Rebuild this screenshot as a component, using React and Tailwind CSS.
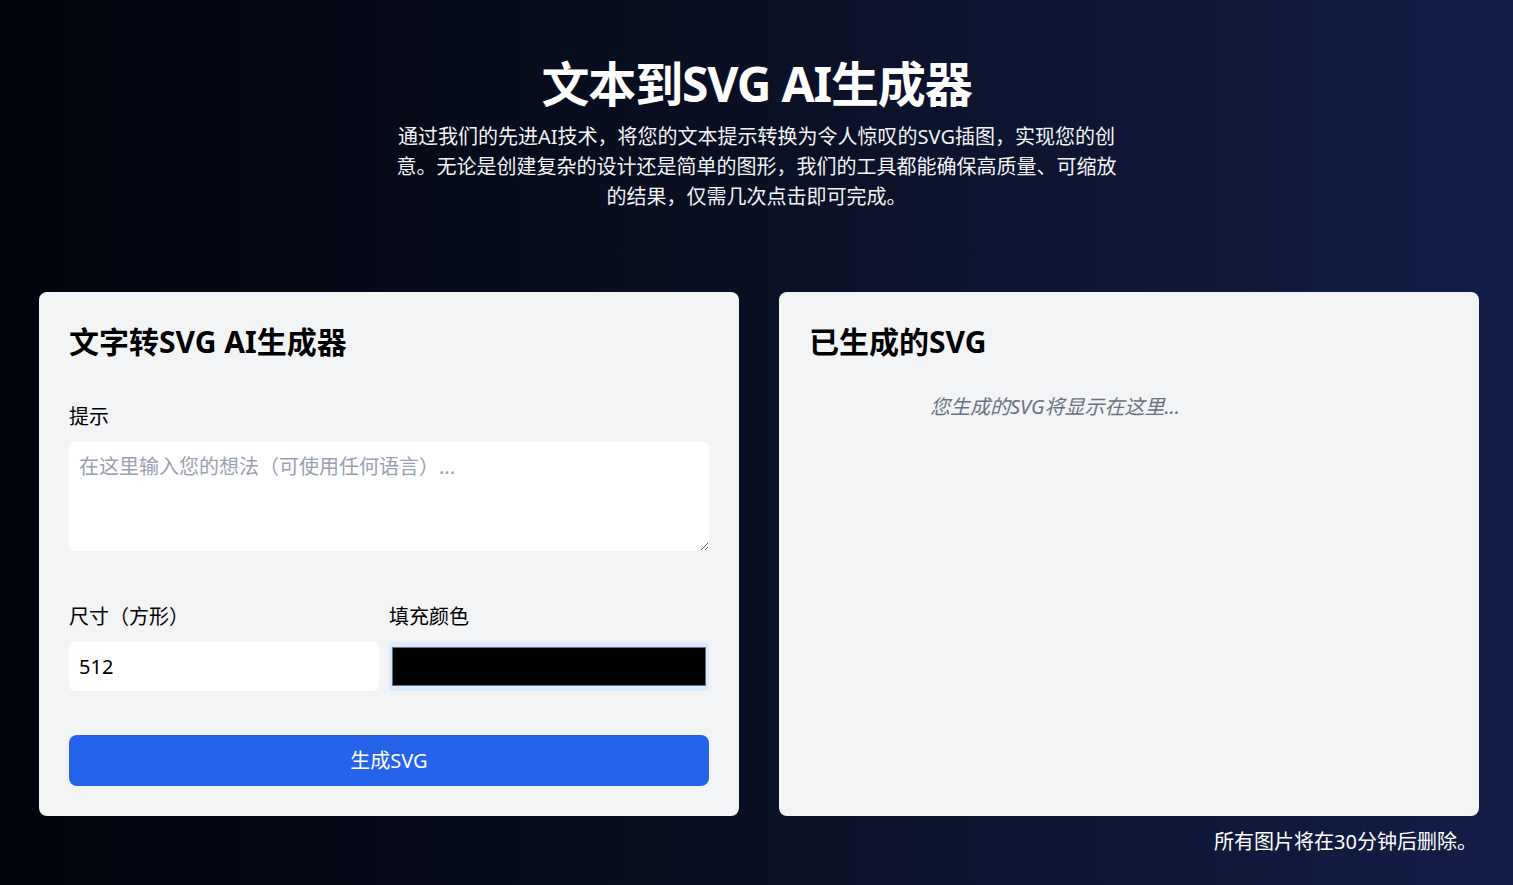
export default function App() {
  const font = { fontFamily: '"Noto Sans", "Noto Sans CJK SC", sans-serif' };

  return (
    <div
      style={font}
      className="min-h-screen w-full bg-gradient-to-r from-[#03050d] via-[#0a1024] to-[#131d48] text-white"
    >
      <div className="flex flex-col items-center pt-[56px]">
        <h1 className="text-[48px] font-bold leading-[56px] tracking-tight">
          文本到SVG AI生成器
        </h1>
        <p className="mt-[10px] w-[728px] text-center text-[20px] leading-[30px] text-gray-100">
          通过我们的先进AI技术，将您的文本提示转换为令人惊叹的SVG插图，实现您的创意。无论是创建复杂的设计还是简单的图形，我们的工具都能确保高质量、可缩放的结果，仅需几次点击即可完成。
        </p>
      </div>

      <div className="ml-[39px] mt-[80px] grid w-[1440px] grid-cols-2 gap-10">
        {/* Form card */}
        <div className="rounded-lg bg-[#f3f4f6] p-[30px] text-black">
          <h2 className="text-[30px] font-bold leading-[40px]">文字转SVG AI生成器</h2>

          <label className="mt-[41px] block text-[20px] leading-[28px]">提示</label>
          <textarea
            className="mt-[11px] block h-[109px] w-full rounded-md bg-white px-[10px] py-[11px] text-[20px] leading-[28px] placeholder:text-gray-400 focus:outline-none"
            placeholder="在这里输入您的想法（可使用任何语言）..."
          />

          <div className="mt-[52px] grid grid-cols-[310px_1fr] gap-[10px]">
            <div>
              <label className="block text-[20px] leading-[28px]">尺寸（方形）</label>
              <div className="mt-[11px] flex h-[49px] items-center rounded-md bg-white px-[10px] text-[20px]">
                512
              </div>
            </div>
            <div>
              <label className="block text-[20px] leading-[28px]">填充颜色</label>
              <div className="mt-[11px] h-[49px] rounded-sm bg-blue-100 px-[3px] py-[5px]">
                <div className="h-full w-full border border-gray-500 bg-black" />
              </div>
            </div>
          </div>

          <button className="mt-[44px] flex h-[51px] w-full items-center justify-center rounded-lg bg-[#2563eb] text-[20px] text-white">
            生成SVG
          </button>
        </div>

        {/* Output card */}
        <div className="rounded-lg bg-[#f3f4f6] p-[30px] text-black">
          <h2 className="text-[30px] font-bold leading-[40px]">已生成的SVG</h2>
          <p className="mt-[31px] pl-[121px] text-[20px] italic leading-[28px] text-gray-500">
            您生成的SVG将显示在这里...
          </p>
        </div>
      </div>

      <div className="ml-[39px] flex w-[1440px] justify-end pr-[2px] pt-[12px] pb-[20px]">
        <p className="text-[20px] leading-[28px]">所有图片将在30分钟后删除。</p>
      </div>
    </div>
  );
}
